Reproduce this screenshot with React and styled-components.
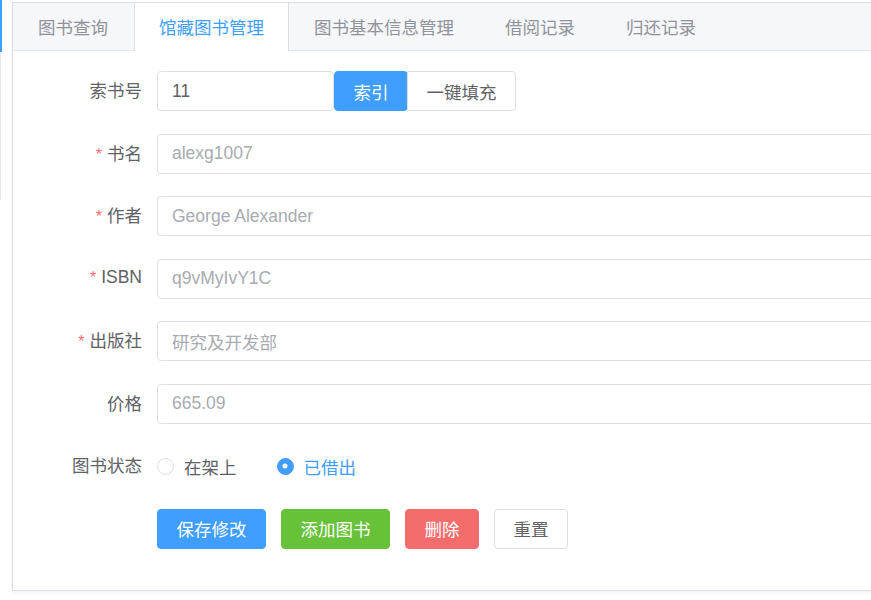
import React, { useState } from "react";
import styled, { createGlobalStyle, css } from "styled-components";

const GlobalStyle = createGlobalStyle`
  html, body {
    margin: 0;
    padding: 0;
    background: #fff;
    font-family: "Liberation Sans", "Noto Sans CJK SC", sans-serif;
    overflow: hidden;
  }
  * { box-sizing: border-box; }
`;

const tabs = ["图书查询", "馆藏图书管理", "图书基本信息管理", "借阅记录", "归还记录"];

const fields = [
  { label: "书名", value: "alexg1007", required: true },
  { label: "作者", value: "George Alexander", required: true },
  { label: "ISBN", value: "q9vMyIvY1C", required: true },
  { label: "出版社", value: "研究及开发部", required: true },
  { label: "价格", value: "665.09" },
];

const App = () => {
  const [active, setActive] = useState(1);
  const [status, setStatus] = useState("out");

  return (
    <>
      <GlobalStyle />
      <Page>
        <SideEdge>
          <span className="active" />
          <span className="rest" />
        </SideEdge>
        <Card>
          <TabBar>
            {tabs.map((t, i) => (
              <Tab key={t} $active={i === active} onClick={() => setActive(i)}>
                {t}
              </Tab>
            ))}
          </TabBar>
          <Body>
            <Row>
              <Label>索书号</Label>
              <Control>
                <Input $width="177px" $dark defaultValue="11" />
                <AppendButton $primary>索引</AppendButton>
                <AppendButton $last>一键填充</AppendButton>
              </Control>
            </Row>
            {fields.map((f) => (
              <Row key={f.label}>
                <Label $required={f.required}>{f.label}</Label>
                <Control>
                  <Input defaultValue={f.value} />
                </Control>
              </Row>
            ))}
            <Row>
              <Label>图书状态</Label>
              <Control>
                <Radio $checked={status === "in"} onClick={() => setStatus("in")}>
                  <i />
                  在架上
                </Radio>
                <Radio $checked={status === "out"} onClick={() => setStatus("out")}>
                  <i />
                  已借出
                </Radio>
              </Control>
            </Row>
            <Row>
              <Label />
              <Control $gap="15px">
                <Button $kind="primary">保存修改</Button>
                <Button $kind="success">添加图书</Button>
                <Button $kind="danger">删除</Button>
                <Button>重置</Button>
              </Control>
            </Row>
          </Body>
        </Card>
      </Page>
    </>
  );
};

export default App;

const Page = styled.div`
  display: flex;
  width: 100vw;
  height: 600px;
`;

const SideEdge = styled.div`
  width: 2px;
  flex-shrink: 0;
  display: flex;
  flex-direction: column;
  margin-right: 10px;

  .active {
    height: 52px;
    background: #409eff;
  }
  .rest {
    height: 148px;
    width: 1px;
    background: #e4e7ed;
  }
`;

const Card = styled.div`
  margin-top: 2px;
  width: 1000px;
  height: 589px;
  flex-shrink: 0;
  border: 1px solid #dcdfe6;
  background: #fff;
  box-shadow: 0 2px 4px 0 rgba(0, 0, 0, 0.06);
  display: flex;
  flex-direction: column;
`;

const TabBar = styled.div`
  display: flex;
  height: 48px;
  background: #f5f7fa;
  border-bottom: 1px solid #e4e7ed;
`;

const Tab = styled.div`
  padding: 0 25px;
  height: 48px;
  line-height: 47px;
  font-size: 17.5px;
  color: #909399;
  cursor: pointer;
  border-right: 1px solid transparent;
  font-family: "Noto Sans CJK SC", sans-serif;

  ${(p) =>
    p.$active &&
    css`
      padding: 0 24px;
      color: #409eff;
      background: #fff;
      border-left: 1px solid #dcdfe6;
      border-right: 1px solid #dcdfe6;
    `}
`;

const Body = styled.div`
  padding: 20px 0 0 20px;
`;

const Row = styled.div`
  display: flex;
  align-items: center;
  height: 40px;
  margin-bottom: 22.5px;
`;

const Label = styled.label`
  width: 124px;
  padding-right: 15px;
  padding-bottom: 3px;
  text-align: right;
  font-size: 17.5px;
  color: #606266;
  font-family: "Liberation Sans", "Noto Sans CJK SC", sans-serif;

  ${(p) =>
    p.$required &&
    css`
      &::before {
        content: "*";
        color: #f56c6c;
        margin-right: 5px;
        font-size: 16px;
      }
    `}
`;

const Control = styled.div`
  flex: 1;
  display: flex;
  align-items: center;
  gap: ${(p) => p.$gap || "0"};
`;

const Input = styled.input`
  width: ${(p) => p.$width || "100%"};
  height: 40px;
  padding: 0 14px;
  border: 1px solid #dcdfe6;
  border-radius: 4px;
  font-size: 17.5px;
  font-family: "Liberation Sans", "Noto Sans CJK SC", sans-serif;
  color: ${(p) => (p.$dark ? "#606266" : "#a8abb2")};
  background: #fff;
  outline: none;
`;

const AppendButton = styled.button`
  height: 40px;
  padding: 0 18.5px;
  font-size: 17.5px;
  font-family: "Noto Sans CJK SC", sans-serif;
  border: 1px solid ${(p) => (p.$primary ? "#409eff" : "#dcdfe6")};
  background: ${(p) => (p.$primary ? "#409eff" : "#fff")};
  color: ${(p) => (p.$primary ? "#fff" : "#606266")};
  border-radius: ${(p) => (p.$last ? "0 4px 4px 0" : "4px")};
  margin-left: ${(p) => (p.$primary ? "0" : "-1px")};
  cursor: pointer;
`;

const palette = {
  primary: { bg: "#409eff", fg: "#fff", bd: "#409eff" },
  success: { bg: "#67c23a", fg: "#fff", bd: "#67c23a" },
  danger: { bg: "#f56c6c", fg: "#fff", bd: "#f56c6c" },
  plain: { bg: "#fff", fg: "#606266", bd: "#dcdfe6" },
};

const Button = styled.button`
  height: 40px;
  padding: 0 18.5px;
  font-size: 17.5px;
  font-family: "Noto Sans CJK SC", sans-serif;
  border-radius: 4px;
  cursor: pointer;
  background: ${(p) => palette[p.$kind || "plain"].bg};
  color: ${(p) => palette[p.$kind || "plain"].fg};
  border: 1px solid ${(p) => palette[p.$kind || "plain"].bd};
`;

const Radio = styled.span`
  display: inline-flex;
  align-items: center;
  gap: 10px;
  margin-right: 40px;
  font-size: 17.5px;
  font-family: "Noto Sans CJK SC", sans-serif;
  color: ${(p) => (p.$checked ? "#409eff" : "#606266")};
  cursor: pointer;

  i {
    position: relative;
    width: 17px;
    height: 17px;
    border-radius: 50%;
    border: 1px solid ${(p) => (p.$checked ? "#409eff" : "#dcdfe6")};
    background: ${(p) => (p.$checked ? "#409eff" : "#fff")};
  }
  i::after {
    content: "";
    display: ${(p) => (p.$checked ? "block" : "none")};
    position: absolute;
    left: 50%;
    top: 50%;
    width: 5px;
    height: 5px;
    border-radius: 50%;
    background: #fff;
    transform: translate(-50%, -50%);
  }
`;
